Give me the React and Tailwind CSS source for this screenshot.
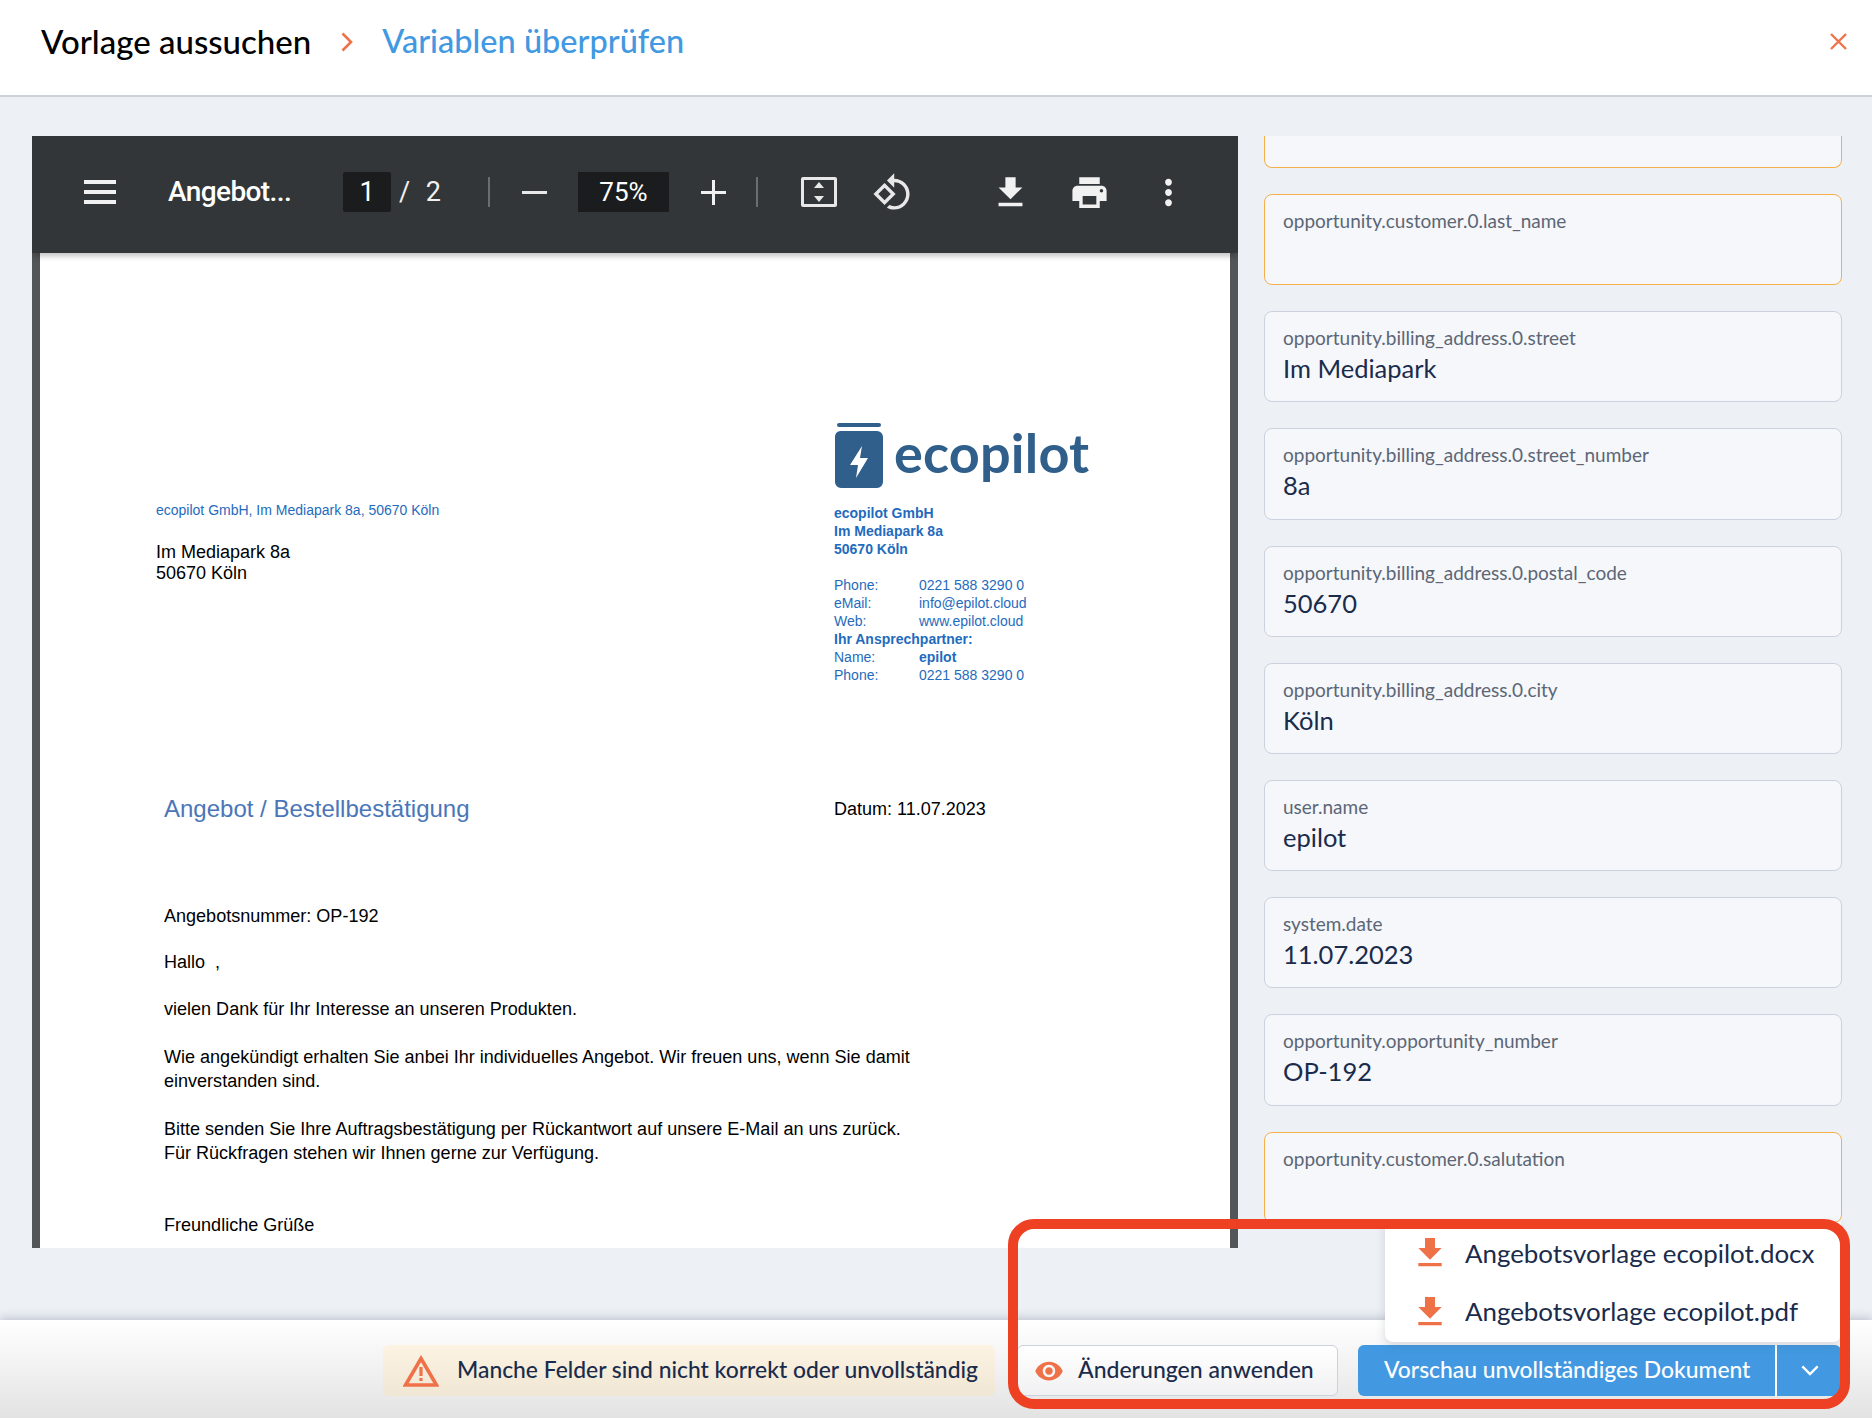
import React from "react";

const proxima = "font-['Lato','Noto_Sans',sans-serif]";

const fields = [
  { label: "opportunity.customer.0.last_name", value: "", warn: true },
  { label: "opportunity.billing_address.0.street", value: "Im Mediapark" },
  { label: "opportunity.billing_address.0.street_number", value: "8a" },
  { label: "opportunity.billing_address.0.postal_code", value: "50670" },
  { label: "opportunity.billing_address.0.city", value: "Köln" },
  { label: "user.name", value: "epilot" },
  { label: "system.date", value: "11.07.2023" },
  { label: "opportunity.opportunity_number", value: "OP-192" },
  { label: "opportunity.customer.0.salutation", value: "", warn: true },
];

const contact = [
  { a: "Phone:", b: "0221 588 3290 0" },
  { a: "eMail:", b: "info@epilot.cloud" },
  { a: "Web:", b: "www.epilot.cloud" },
];

const DownloadIcon = ({ className }) => (
  <svg viewBox="0 0 24 24" fill="currentColor" className={className}>
    <path d="M19 9h-4V3H9v6H5l7 7 7-7zM5 18v2h14v-2H5z" />
  </svg>
);

const ToolbarDivider = () => <div className="w-[2px] h-[30px] bg-[#6b6e71]" />;

const PdfToolbar = () => (
  <div className="h-[117px] pb-[5px] bg-[#323639] flex items-center text-white shrink-0 font-['Roboto',sans-serif] shadow-[0_3px_6px_rgba(0,0,0,0.25)] relative z-10">
    <div className="ml-[52px] w-[32px] h-[24px] flex flex-col justify-between">
      <div className="h-[4px] bg-[#f1f1f1]" />
      <div className="h-[4px] bg-[#f1f1f1]" />
      <div className="h-[4px] bg-[#f1f1f1]" />
    </div>
    <div className="ml-[52px] w-[124px] text-[28px] font-medium tracking-[-0.6px] whitespace-nowrap">Angebot...</div>
    <div className="ml-[51px] w-[48px] h-[40px] bg-[#1b1c1e] rounded-[2px] flex items-center justify-center text-[27px]">1</div>
    <div className="ml-[8px] w-[42px] flex justify-between text-[27px] text-[#f1f1f1]">
      <span>/</span>
      <span>2</span>
    </div>
    <div className="ml-[47px]"><ToolbarDivider /></div>
    <div className="ml-[32px] w-[25px] h-[3px] bg-[#e8e8e8]" />
    <div className="ml-[31px] w-[91px] h-[40px] bg-[#1b1c1e] flex items-center justify-center text-[26px]">75%</div>
    <svg viewBox="0 0 25 25" className="ml-[32px] w-[25px] h-[25px]" fill="#f1f1f1">
      <rect x="11" y="0" width="3" height="25" />
      <rect x="0" y="11" width="25" height="3" />
    </svg>
    <div className="ml-[30px]"><ToolbarDivider /></div>
    <svg viewBox="0 0 36 30" className="ml-[43px] w-[36px] h-[30px]" fill="#e8e8e8">
      <path fillRule="evenodd" d="M2 0h32a2 2 0 0 1 2 2v26a2 2 0 0 1-2 2H2a2 2 0 0 1-2-2V2a2 2 0 0 1 2-2zm1 3v24h30V3H3z" />
      <path d="M18 5l5 6H13zM18 25l-5-6h10z" />
    </svg>
    <svg viewBox="0 0 24 24" fill="#e8e8e8" className="ml-[35px] w-[41px] h-[41px]">
      <path d="M7.34 6.41L.86 12.9l6.49 6.48 6.49-6.48-6.5-6.49zM3.69 12.9l3.66-3.66L11 12.9l-3.66 3.66-3.65-3.66zm15.67-6.26C17.61 4.88 15.3 4 13 4V.76L8.76 5 13 9.24V6c1.79 0 3.58.68 4.95 2.05 2.73 2.73 2.73 7.17 0 9.9C16.58 19.32 14.79 20 13 20c-.97 0-1.94-.21-2.84-.61l-1.49 1.49C10.02 21.62 11.51 22 13 22c2.3 0 4.61-.88 6.36-2.64 3.52-3.51 3.52-9.21 0-12.72z" />
    </svg>
    <DownloadIcon className="ml-[77px] w-[41px] h-[41px] text-[#f1f1f1]" />
    <svg viewBox="0 0 24 24" fill="#f1f1f1" className="ml-[38px] w-[41px] h-[41px]">
      <path d="M19 8H5c-1.66 0-3 1.34-3 3v6h4v4h12v-4h4v-6c0-1.66-1.34-3-3-3zm-3 11H8v-5h8v5zm3-7c-.55 0-1-.45-1-1s.45-1 1-1 1 .45 1 1-.45 1-1 1zm-1-9H6v4h12V3z" />
    </svg>
    <svg viewBox="0 0 24 24" fill="#f1f1f1" className="ml-[38px] w-[41px] h-[41px]">
      <path d="M12 8c1.1 0 2-.9 2-2s-.9-2-2-2-2 .9-2 2 .9 2 2 2zm0 2c-1.1 0-2 .9-2 2s.9 2 2 2 2-.9 2-2-.9-2-2-2zm0 6c-1.1 0-2 .9-2 2s.9 2 2 2 2-.9 2-2-.9-2-2-2z" />
    </svg>
  </div>
);

const EcopilotLogo = () => (
  <div className="flex items-center h-[65px]">
    <svg viewBox="0 0 49 65" className="w-[49px] h-[65px]" fill="#2f5f8a">
      <rect x="3" y="0" width="44" height="4" rx="2" />
      <path fillRule="evenodd" d="M6 8h37a6 6 0 0 1 6 6v45a6 6 0 0 1-6 6H7a6 6 0 0 1-6-6V14a6 6 0 0 1 5-6zM28 23L16 42h8l-2 13 12-20h-8z" />
    </svg>
    <span className="ml-[11px] mb-[5px] text-[54px] leading-none font-bold text-[#2f5f8a] font-['Lato',sans-serif] tracking-[0.2px]">ecopilot</span>
  </div>
);

const PdfPage = () => (
  <div className="flex-1 bg-[#525659] px-[8px] overflow-hidden min-h-0">
    <div className="bg-white h-[1100px] font-['Liberation_Sans',sans-serif] text-[18px] leading-[21px] text-black">
      <div className="flex">
        <div className="ml-[116px] w-[678px] pt-[248px]">
          <div className="text-[14px] leading-[18px] text-[#1f6bbd]">ecopilot GmbH, Im Mediapark 8a, 50670 Köln</div>
          <div className="mt-[23px]">Im Mediapark 8a</div>
          <div>50670 Köln</div>
        </div>
        <div className="pt-[170px]">
          <EcopilotLogo />
          <div className="mt-[16px] text-[14px] leading-[18px] text-[#1f6bbd]">
            <div className="font-bold">ecopilot GmbH</div>
            <div className="font-bold">Im Mediapark 8a</div>
            <div className="font-bold">50670 Köln</div>
            <div className="mt-[18px]">
              {contact.map((c) => (
                <div key={c.a} className="flex">
                  <span className="w-[85px]">{c.a}</span>
                  <span>{c.b}</span>
                </div>
              ))}
              <div className="font-bold">Ihr Ansprechpartner:</div>
              <div className="flex">
                <span className="w-[85px]">Name:</span>
                <span className="font-bold">epilot</span>
              </div>
              <div className="flex">
                <span className="w-[85px]">Phone:</span>
                <span>0221 588 3290 0</span>
              </div>
            </div>
          </div>
        </div>
      </div>
      <div className="flex items-center mt-[110px]">
        <div className="ml-[124px] w-[670px] text-[24px] leading-[30px] text-[#4a76b8]">Angebot / Bestellbestätigung</div>
        <div>Datum: 11.07.2023</div>
      </div>
      <div className="ml-[124px] mt-[82px] text-[18.05px]">
        <div>Angebotsnummer: OP-192</div>
        <div className="mt-[25px]">Hallo &nbsp;,</div>
        <div className="mt-[26px]">vielen Dank für Ihr Interesse an unseren Produkten.</div>
        <div className="mt-[27px]">Wie angekündigt erhalten Sie anbei Ihr individuelles Angebot. Wir freuen uns, wenn Sie damit</div>
        <div className="mt-[3px]">einverstanden sind.</div>
        <div className="mt-[27px]">Bitte senden Sie Ihre Auftragsbestätigung per Rückantwort auf unsere E-Mail an uns zurück.</div>
        <div className="mt-[3px]">Für Rückfragen stehen wir Ihnen gerne zur Verfügung.</div>
        <div className="mt-[51px]">Freundliche Grüße</div>
      </div>
    </div>
  </div>
);

const FieldCard = ({ label, value, warn }) => (
  <div className={`h-[91.2px] shrink-0 rounded-[8px] border-[1.5px] bg-[#f5f7fb] px-[18px] pt-[14px] ${warn ? "border-[#f6b04a]" : "border-[#cbd2dd]"}`}>
    <div className="text-[19px] leading-[24px] text-[#5c6675]">{label}</div>
    {value && <div className="mt-[2px] text-[25.5px] leading-[32px] text-[#1a2b4b]">{value}</div>}
  </div>
);

export default function App() {
  return (
    <div className={`relative w-[1872px] h-[1418px] overflow-hidden flex flex-col bg-[#edf0f5] ${proxima}`}>
      {/* Header steps */}
      <header className="h-[97px] shrink-0 bg-white border-b-2 border-[#cdd1d8] flex items-center pl-[41px] pr-[25px] pb-[12px] text-[33px] font-medium">
        <span className="text-black">Vorlage aussuchen</span>
        <svg viewBox="0 0 12 20" className="ml-[30px] w-[12px] h-[20px]" fill="none" stroke="#ee7148" strokeWidth="2.6">
          <path d="M1.5 1.5L10 10L1.5 18.5" />
        </svg>
        <span className="ml-[29px] text-[32.5px] text-[#4299e1]">Variablen überprüfen</span>
        <svg viewBox="0 0 17 17" className="ml-auto w-[17px] h-[17px]" fill="none" stroke="#f0744a" strokeWidth="2.4">
          <path d="M1 1L16 16M16 1L1 16" />
        </svg>
      </header>

      {/* Main area */}
      <div className="flex-1 min-h-0 pl-[32px] pr-[30px] pt-[39px] pb-[72px] flex gap-[26px]">
        <div className="w-[1206px] shrink-0 flex flex-col overflow-hidden">
          <PdfToolbar />
          <PdfPage />
        </div>
        <div className="flex-1 overflow-hidden flex flex-col gap-[26px]">
          <div className="h-[32px] shrink-0 rounded-b-[8px] border-[1.5px] border-t-0 border-[#f6b04a] bg-[#f5f7fb]" />
          {fields.map((f) => (
            <FieldCard key={f.label} {...f} />
          ))}
        </div>
      </div>

      {/* Footer */}
      <footer className="relative h-[98px] shrink-0 bg-gradient-to-b from-white to-[#e3e3e3] shadow-[0_-3px_8px_rgba(120,130,150,0.35)] flex items-start justify-end pt-[25px] pr-[31px]">
        <div className="w-[612px] h-[51px] rounded-[6px] bg-gradient-to-b from-[#fcf3e3] to-[#f0e6d4] flex items-center pl-[20px]">
          <svg viewBox="0 0 36 32" className="w-[36px] h-[32px]">
            <path d="M18 3.5L33.5 30H2.5z" fill="none" stroke="#ee7148" strokeWidth="3.6" />
            <rect x="16.4" y="12" width="3.2" height="9" fill="#ee7148" />
            <rect x="16.4" y="23" width="3.2" height="3" fill="#ee7148" />
          </svg>
          <span className="ml-[18px] pb-[2px] text-[22.85px] font-medium text-[#1a2b4b] whitespace-nowrap">Manche Felder sind nicht korrekt oder unvollständig</span>
        </div>
        <div className="ml-[22px] w-[321px] h-[51px] rounded-[6px] border-[1.5px] border-[#cbd2dd] bg-gradient-to-b from-white to-[#f1f1f3] flex items-center pl-[16px]">
          <svg viewBox="0 0 24 24" fill="#ee7148" className="w-[30px] h-[30px]">
            <path d="M12 4.5C7 4.5 2.73 7.61 1 12c1.73 4.39 6 7.5 11 7.5s9.27-3.11 11-7.5c-1.73-4.39-6-7.5-11-7.5zM12 17c-2.76 0-5-2.24-5-5s2.24-5 5-5 5 2.24 5 5-2.24 5-5 5zm0-8c-1.66 0-3 1.34-3 3s1.34 3 3 3 3-1.34 3-3-1.34-3-3-3z" />
          </svg>
          <span className="ml-[14px] pb-[2px] text-[23px] font-medium text-[#1a2b4b] whitespace-nowrap">Änderungen anwenden</span>
        </div>
        <div className="ml-[20px] h-[51px] flex rounded-[6px] overflow-hidden bg-[#4299e1] text-white">
          <div className="w-[419px] flex items-center pl-[26px] pb-[2px] text-[22.85px] font-medium whitespace-nowrap border-r-2 border-white">Vorschau unvollständiges Dokument</div>
          <div className="w-[63px] ml-[1px] flex items-center justify-center">
            <svg viewBox="0 0 20 12" className="w-[18px] h-[11px]" fill="none" stroke="white" strokeWidth="2.6">
              <path d="M1.5 1.5L10 10L18.5 1.5" />
            </svg>
          </div>
        </div>
      </footer>

      {/* Download menu opened from the split button */}
      <div className="absolute left-[1385px] top-[1222px] w-[456px] h-[120px] bg-white rounded-b-[8px] shadow-[0_4px_10px_rgba(80,90,110,0.2)] pt-[2px] text-[25.9px] text-[#1a2b4b]">
        <div className="h-[58.6px] flex items-center pl-[25px]">
          <DownloadIcon className="w-[40px] h-[40px] text-[#ee7148]" />
          <span className="ml-[15px] whitespace-nowrap">Angebotsvorlage ecopilot.docx</span>
        </div>
        <div className="h-[58.6px] flex items-center pl-[25px]">
          <DownloadIcon className="w-[40px] h-[40px] text-[#ee7148]" />
          <span className="ml-[15px] whitespace-nowrap">Angebotsvorlage ecopilot.pdf</span>
        </div>
      </div>

      {/* Red annotation frame */}
      <div className="absolute left-[1008px] top-[1219px] w-[842px] h-[190px] rounded-[26px] border-[10px] border-[#ee4023] pointer-events-none" />
    </div>
  );
}
